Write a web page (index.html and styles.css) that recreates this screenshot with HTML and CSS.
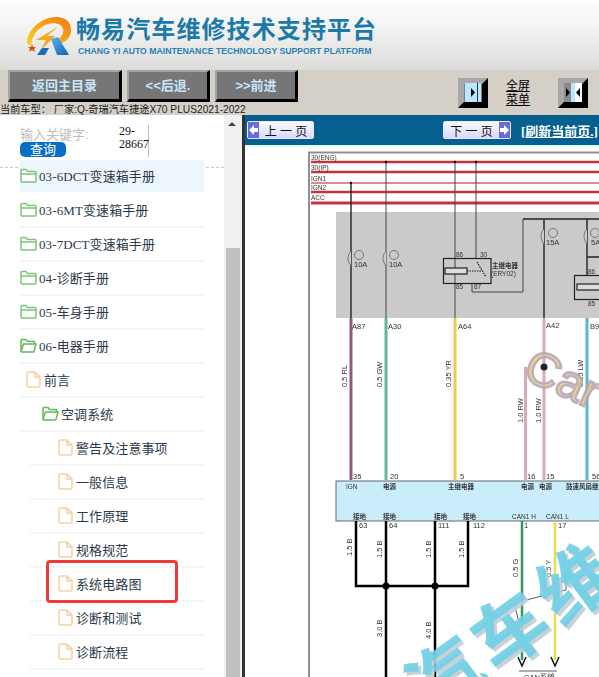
FILE: index.html
```html
<!DOCTYPE html>
<html>
<head>
<meta charset="utf-8"/>
<title>畅易汽车维修技术支持平台</title>
<link rel="stylesheet" href="styles.css">
</head>
<body>

<div class="header">
  <svg class="logo" width="48" height="44" viewBox="0 0 48 44">
    <defs>
      <linearGradient id="swoosh" x1="0" y1="1" x2="1" y2="0">
        <stop offset="0" stop-color="#ffd21e"/>
        <stop offset="0.55" stop-color="#f9a010"/>
        <stop offset="1" stop-color="#ee7a12"/>
      </linearGradient>
      <linearGradient id="rleg" x1="0" y1="0" x2="1" y2="1">
        <stop offset="0" stop-color="#59b4ee"/>
        <stop offset="1" stop-color="#1260b8"/>
      </linearGradient>
    </defs>
    <path d="M2 28C2 14 18 1 33 2C43 3 47 10 46 17C45 23 41 26 37 28L31 26C36 23 39 19 38 14C37 9 30 7 23 9C13 12 7 20 6 31Z" fill="url(#swoosh)"/>
    <path d="M34 11L11 25L21 25L16 35L30 21L22 21Z" fill="#f7a815"/>
    <path d="M12 40L17 33L24 33L20 40Z" fill="#1c6cc0"/>
    <path d="M26 24L33 22L44 40L32 40Z" fill="url(#rleg)"/>
    <path d="M7 29L8 32L11 32L9 34L10 37L7 35L4 37L5 34L3 32L6 32Z" fill="#e0491c"/>
  </svg>
  <div class="brand">
    <div class="brand-cn">畅易汽车维修技术支持平台</div>
    <div class="brand-en">CHANG YI AUTO MAINTENANCE TECHNOLOGY SUPPORT PLATFORM</div>
  </div>
</div>

<div class="toolbar">
  <div class="toolbar-left">
    <div class="navbtns">
      <a class="navbtn wide">返回主目录</a>
      <a class="navbtn">&lt;&lt;后退.</a>
      <a class="navbtn">&gt;&gt;前进</a>
    </div>
    <div class="status">当前车型： 厂家:Q-奇瑞汽车捷途X70 PLUS2021-2022</div>
  </div>
  <div class="tools">
    <svg width="30" height="30" viewBox="0 0 30 30">
      <rect width="30" height="30" fill="#808080"/>
      <path d="M0 0H30L24 6H6V24L0 30Z" fill="#a8a8a8"/>
      <path d="M30 0V30H0L6 24H24V6Z" fill="#000"/>
      <rect x="7" y="5" width="16" height="19" fill="#b8e8ff"/>
      <rect x="19" y="5" width="1" height="19" fill="#333"/>
      <path d="M13 10L17 14.500L13 19Z" fill="#000"/>
    </svg>
    <a class="fullscreen">全屏<br/>菜单</a>
    <svg width="30" height="30" viewBox="0 0 30 30">
      <rect width="30" height="30" fill="#808080"/>
      <path d="M0 0H30L24 6H6V24L0 30Z" fill="#a8a8a8"/>
      <path d="M30 0V30H0L6 24H24V6Z" fill="#000"/>
      <rect x="6" y="5" width="7" height="19" fill="#8a8a8a"/>
      <rect x="13" y="5" width="4" height="19" fill="#b8e8ff"/>
      <rect x="17" y="5" width="7" height="19" fill="#fff"/>
      <path d="M8 10L12 14.500L8 19Z" fill="#000"/>
      <path d="M22 10L18 14.500L22 19Z" fill="#000"/>
    </svg>
  </div>
</div>

<div class="main">
  <div class="sidebar">
    <div class="panel">
      <div class="search">
        <div class="search-left">
          <div class="search-label">输入关键字:</div>
          <a class="search-btn">查询</a>
        </div>
        <div class="search-value">29-28667</div>
      </div>
      <div class="tree">
        <div class="row active"><svg class="ico"><use href="#folder"/></svg>03-6DCT变速箱手册</div>
        <div class="row"><svg class="ico"><use href="#folder"/></svg>03-6MT变速箱手册</div>
        <div class="row"><svg class="ico"><use href="#folder"/></svg>03-7DCT变速箱手册</div>
        <div class="row"><svg class="ico"><use href="#folder"/></svg>04-诊断手册</div>
        <div class="row"><svg class="ico"><use href="#folder"/></svg>05-车身手册</div>
        <div class="row"><svg class="ico"><use href="#folder-open"/></svg>06-电器手册</div>
        <div class="row lvl1"><svg class="ico"><use href="#file"/></svg>前言</div>
        <div class="row lvl2"><svg class="ico"><use href="#folder-open"/></svg>空调系统</div>
        <div class="row lvl3"><svg class="ico"><use href="#file"/></svg>警告及注意事项</div>
        <div class="row lvl3"><svg class="ico"><use href="#file"/></svg>一般信息</div>
        <div class="row lvl3"><svg class="ico"><use href="#file"/></svg>工作原理</div>
        <div class="row lvl3"><svg class="ico"><use href="#file"/></svg>规格规范</div>
        <div class="row lvl3 marked"><svg class="ico"><use href="#file"/></svg>系统电路图<span class="redbox"></span></div>
        <div class="row lvl3"><svg class="ico"><use href="#file"/></svg>诊断和测试</div>
        <div class="row lvl3"><svg class="ico"><use href="#file"/></svg>诊断流程</div>
      </div>
    </div>
    <div class="scrollbar">
      <span class="scroll-up"></span>
      <span class="scroll-thumb"></span>
    </div>
  </div>

  <div class="viewer">
    <div class="pagebar">
      <a class="pagebtn prev"><span class="pagebtn-arrow"><svg width="9" height="10"><path d="M0 5L5 0V3H9V7H5V10Z" fill="#fff"/></svg></span><span class="pagebtn-text">上 一 页</span></a>
      <a class="pagebtn next"><span class="pagebtn-text">下 一 页</span><span class="pagebtn-arrow"><svg width="9" height="10"><path d="M9 5L4 0V3H0V7H4V10Z" fill="#fff"/></svg></span></a>
      <a class="refresh">[刷新当前页.]</a>
    </div>
    <div class="sheet">
      <!-- wiring diagram, coordinates are page pixels -->
      <svg class="diagram" width="354" height="532" viewBox="245 145 354 532">
        <rect x="245" y="145" width="354" height="2" fill="#e6fbff"/>
        <path d="M309 677V152.500H599" class="frame"/>

        <path d="M311 162H599M311 172H599M311 192H599" class="bus"/>
        <path d="M311 183H599" class="bus thin"/>
        <path d="M311 203H599" class="bus thick"/>
        <text x="311" y="160" class="lbl">30(ENG)</text>
        <text x="311" y="170" class="lbl">30(IP)</text>
        <text x="311" y="181" class="lbl">IGN1</text>
        <text x="311" y="190" class="lbl">IGN2</text>
        <text x="311" y="200" class="lbl">ACC</text>

        <rect x="336" y="212" width="263" height="106" fill="#cacaca"/>

        <path d="M351 183V318" class="w blk"/>
        <path d="M386 162V318M455 162V318M476 162V258" class="w gry"/>
        <path d="M544 219V318M587 219V275" class="w blk"/>
        <path d="M523 219H599M587 257H599" class="w blk"/>
        <path d="M523 219V292H472V283" class="w gry"/>

        <circle cx="386" cy="162" r="1.200"/><circle cx="455" cy="162" r="1.200"/><circle cx="476" cy="162" r="1.200"/><circle cx="351" cy="183" r="1.200"/>

        <g class="fuses">
          <circle cx="359" cy="255" r="4.500"/><circle cx="394" cy="255" r="4.500"/><circle cx="553" cy="233" r="4.500"/><circle cx="595" cy="233" r="4.500"/>
          <path d="M351 251C347 255 347 261 351 266M386 251C382 255 382 261 386 266M544 229C540 233 540 239 544 244M587 229C583 233 583 239 587 244"/>
        </g>
        <text x="354" y="267" class="lbl big">10A</text>
        <text x="389" y="267" class="lbl big">10A</text>
        <text x="546" y="245" class="lbl big">15A</text>
        <text x="591" y="245" class="lbl big">5A</text>

        <rect x="443.500" y="258.500" width="47.500" height="25" class="relay"/>
        <rect x="445" y="268" width="22" height="6" class="relay thin"/>
        <path d="M467 271H482M477 262L486 277" class="relay dash"/>
        <text x="456" y="257" class="lbl">86</text>
        <text x="480" y="257" class="lbl">30</text>
        <text x="456" y="289" class="lbl">85</text>
        <text x="474" y="289" class="lbl">87</text>
        <text x="492" y="268" class="lbl cn">主继电器</text>
        <text x="491" y="276" class="lbl">(ERY02)</text>
        <rect x="574.500" y="275.500" width="30" height="24" class="relay"/>
        <rect x="577" y="284" width="28" height="6" class="relay thin"/>
        <text x="588" y="274" class="lbl">86</text>
        <text x="588" y="306" class="lbl">85</text>

        <path d="M351 318V480" class="core" stroke="#8f5a7c"/>
        <path d="M386 318V480" class="core" stroke="#62b79a"/>
        <path d="M455 318V480" class="core" stroke="#f2c94c"/>
        <path d="M525.500 367V480" class="core" stroke="#d9a9b6"/>
        <path d="M544 318V480" class="core" stroke="#d9a9b6"/>
        <path d="M587 318V480" class="core" stroke="#5cb6c9"/>
        <circle cx="544" cy="367" r="3.500" fill="#222"/>

        <text x="352" y="329" class="lbl big">A87</text>
        <text x="388" y="329" class="lbl big">A30</text>
        <text x="458" y="329" class="lbl big">A64</text>
        <text x="546" y="328" class="lbl big">A42</text>
        <text x="590" y="329" class="lbl big">B99</text>

        <text class="lbl vert" transform="translate(347 387) rotate(-90)">0.5 RL</text>
        <text class="lbl vert" transform="translate(382 387) rotate(-90)">0.5 GW</text>
        <text class="lbl vert" transform="translate(451 387) rotate(-90)">0.35 YR</text>
        <text class="lbl vert" transform="translate(523 423) rotate(-90)">1.0 RW</text>
        <text class="lbl vert" transform="translate(541 423) rotate(-90)">1.0 RW</text>
        <text class="lbl vert" transform="translate(583 387) rotate(-90)">0.35 LW</text>

        <text x="353" y="479" class="lbl big">35</text>
        <text x="390" y="479" class="lbl big">20</text>
        <text x="460" y="479" class="lbl big">5</text>
        <text x="527" y="479" class="lbl big">16</text>
        <text x="546" y="479" class="lbl big">15</text>
        <text x="592" y="479" class="lbl big">56</text>

        <rect x="336" y="481" width="270" height="40" fill="#c9edfb" stroke="#667" stroke-width="1"/>
        <text x="346" y="489" class="lbl">IGN</text>
        <text x="383" y="489" class="lbl cn">电源</text>
        <text x="448" y="489" class="lbl cn">主继电器</text>
        <text x="521" y="489" class="lbl cn">电源</text>
        <text x="539" y="489" class="lbl cn">电源</text>
        <text x="566" y="489" class="lbl cn">鼓速风扇继电器</text>
        <text x="353" y="519" class="lbl cn">接地</text>
        <text x="383" y="519" class="lbl cn">接地</text>
        <text x="434" y="519" class="lbl cn">接地</text>
        <text x="463" y="519" class="lbl cn">接地</text>
        <text x="512" y="519" class="lbl">CAN1 H</text>
        <text x="546" y="519" class="lbl">CAN1 L</text>

        <text x="359" y="528" class="lbl big">63</text>
        <text x="389" y="528" class="lbl big">64</text>
        <text x="438" y="528" class="lbl big">111</text>
        <text x="473" y="528" class="lbl big">112</text>
        <text x="524" y="528" class="lbl big">1</text>
        <text x="558" y="528" class="lbl big">17</text>

        <path d="M356 521V586H468V521M386 521V677M435 521V677" class="heavy"/>
        <circle cx="386" cy="586" r="3.500"/><circle cx="435" cy="586" r="3.500"/>
        <text class="lbl vert" transform="translate(352 556) rotate(-90)">1.5 B</text>
        <text class="lbl vert" transform="translate(382 558) rotate(-90)">1.5 B</text>
        <text class="lbl vert" transform="translate(431 558) rotate(-90)">1.5 B</text>
        <text class="lbl vert" transform="translate(464 558) rotate(-90)">1.5 B</text>
        <text class="lbl vert" transform="translate(382 637) rotate(-90)">3.0 B</text>
        <text class="lbl vert" transform="translate(431 639) rotate(-90)">4.0 B</text>

        <path d="M522 521V660" class="can" stroke="#2e9a5c"/>
        <path d="M555 521V660" class="can" stroke="#e8dc4e"/>
        <path d="M518 657L522 666L526 657M551 657L555 666L559 657" class="arrows"/>
        <text class="lbl vert" transform="translate(518 577) rotate(-90)">0.5 G</text>
        <text class="lbl vert" transform="translate(551 577) rotate(-90)">0.5 Y</text>
        <path d="M519 622L514 603L566 590L566 573" class="twist"/>
        <path d="M519 671H557" class="twist"/>
        <text x="524" y="680" class="lbl big">CAN系统</text>

        <!-- site watermark -->
        <text class="mark-car" transform="translate(521 378) rotate(24)">Car</text>
        <text class="mark-cn shadow" transform="translate(434 724) rotate(-36)">汽车维修</text>
        <text class="mark-cn" transform="translate(431 721) rotate(-36)">汽车维修</text>
      </svg>
    </div>
  </div>
</div>

<svg class="defs" width="0" height="0">
  <symbol id="folder" viewBox="0 0 17 17">
    <path d="M1 14V3.500Q1 2.500 2 2.500H6L7.500 4.500H15Q16 4.500 16 5.500V14Q16 15 15 15H2Q1 15 1 14ZM1 7H16" fill="#fff" stroke="#7cc576" stroke-width="1.500"/>
  </symbol>
  <symbol id="folder-open" viewBox="0 0 17 17">
    <path d="M1 14V3.500Q1 2.500 2 2.500H6L7.500 4.500H14.500V7" fill="#fff" stroke="#62b85c" stroke-width="1.500"/>
    <path d="M1 14.500L3.500 7H16L14 14.500Q14 15 13 15H2Q1 15 1 14.500Z" fill="#fff" stroke="#62b85c" stroke-width="1.500"/>
  </symbol>
  <symbol id="file" viewBox="0 0 17 17">
    <path d="M2 2.500Q2 1 3.500 1H10L15 6V14.500Q15 16 13.500 16H3.500Q2 16 2 14.500ZM10 1V6H15" fill="#fff" stroke="#f6cfa0" stroke-width="1.500"/>
  </symbol>
</svg>

</body>
</html>
```

FILE: styles.css
```css
html, body {
  margin: 0px;
  padding: 0px;
  height: 677px;
  overflow: hidden;
}

body {
  font-family: "Liberation Sans", "Noto Sans CJK SC", sans-serif;
  background: #fff;
  display: flex;
  flex-direction: column;
}

.defs {
  position: absolute;
}

/* top banner */
.header {
  height: 70px;
  flex: none;
  display: flex;
  align-items: flex-start;
  background: linear-gradient(#fdfdfd 0%, #f6f6f6 30%, #dcdcda 100%);
}

.logo {
  margin: 15px 0 0 25px;
  flex: none;
}

.brand {
  margin: 15px 0 0 3px;
}

.brand-cn {
  font-size: 24px;
  line-height: 30px;
  font-weight: bold;
  letter-spacing: 1.100px;
  color: #1c7aa8;
  white-space: nowrap;
}

.brand-en {
  margin: 1px 0 0 2px;
  font-size: 8.700px;
  line-height: 11px;
  font-weight: bold;
  color: #2a80b4;
  white-space: nowrap;
}

/* buttons row */
.toolbar {
  height: 45px;
  flex: none;
  display: flex;
  background: #d4d0c8;
}

.toolbar-left {
  width: 458px;
  flex: none;
}

.navbtns {
  display: flex;
  gap: 5px;
  padding-left: 8px;
}

.navbtn {
  box-sizing: border-box;
  width: 83px;
  height: 32px;
  background: #767676;
  border-style: solid;
  border-width: 2px 3px 3px 2px;
  border-color: #a4a4a4 #000 #000 #a4a4a4;
  color: #c6e6fb;
  font-size: 13px;
  font-weight: bold;
  line-height: 27px;
  text-align: center;
}

.navbtn.wide {
  width: 114px;
}

.status {
  margin-top: 2px;
  font-size: 10.200px;
  line-height: 11px;
  color: #222;
  white-space: nowrap;
}

.tools {
  display: flex;
  align-items: flex-start;
  padding-top: 8px;
}

.fullscreen {
  width: 26px;
  margin: 1px 26px 0 18px;
  font-size: 12px;
  line-height: 14px;
  color: #000;
  text-decoration: underline;
}

/* main area */
.main {
  flex: 1;
  display: flex;
  min-height: 0;
}

.sidebar {
  width: 245px;
  flex: none;
  display: flex;
  box-sizing: border-box;
  border-right: 3px solid #333;
  overflow: hidden;
}

.panel {
  width: 224px;
  flex: none;
  background: #fff;
  overflow: hidden;
}

.search {
  box-sizing: border-box;
  height: 53px;
  padding: 10px 0 0 20px;
  display: flex;
  border-bottom: 1px dashed #c8c8c8;
}

.search-left {
  width: 99px;
}

.search-label {
  padding-top: 2px;
  font-size: 13px;
  line-height: 15px;
  color: #bdbdbd;
  white-space: nowrap;
}

.search-btn {
  display: block;
  width: 46px;
  height: 15px;
  background: #0a6fc4;
  border-radius: 5px;
  color: #fff;
  font-size: 13px;
  line-height: 15px;
  text-align: center;
}

.search-value {
  box-sizing: border-box;
  width: 30px;
  height: 32px;
  font-family: "Liberation Serif", serif;
  font-size: 12px;
  line-height: 13px;
  color: #111;
  border-right: 1px solid #c0c0c0;
}

.tree {
  font-family: "Liberation Serif", "Noto Sans CJK SC", serif;
  font-size: 13px;
  letter-spacing: 0.100px;
  color: #2b3a4a;
  margin-top: -8px;
}

.row {
  position: relative;
  box-sizing: border-box;
  height: 34px;
  margin: 0 20px;
  padding-bottom: 2px;
  display: flex;
  align-items: center;
  gap: 2px;
  border-bottom: 2px solid #f5f5f5;
  white-space: nowrap;
}

.row.active {
  background: #eef6fd;
  border-bottom-color: #fff;
}

.row.lvl1 { padding-left: 5px; }
.row.lvl2 { padding-left: 22px; }
.row.lvl3 { margin-left: 30px; padding-left: 27px; }

.ico {
  width: 17px;
  height: 17px;
  flex: none;
}

.redbox {
  position: absolute;
  left: 16px;
  top: -8px;
  width: 126px;
  height: 37px;
  border: 3px solid #f03a3a;
  border-radius: 4px;
}

.scrollbar {
  position: relative;
  width: 18px;
  flex: none;
  background: #f0f0f0;
}

.scroll-up {
  position: absolute;
  left: 4px;
  top: 7px;
  border-style: solid;
  border-width: 0 4px 4px 4px;
  border-color: transparent transparent #444 transparent;
}

.scroll-thumb {
  position: absolute;
  left: 2px;
  top: 133px;
  bottom: 0px;
  width: 14px;
  background: #c0c0c0;
}

/* right side */
.viewer {
  flex: 1;
  min-width: 0;
  display: flex;
  flex-direction: column;
}

.pagebar {
  height: 30px;
  flex: none;
  background: #05608f;
  display: flex;
  align-items: center;
  white-space: nowrap;
}

.pagebtn {
  box-sizing: border-box;
  height: 18px;
  display: flex;
  align-items: center;
  justify-content: space-between;
  background: linear-gradient(#fafaff, #d8d8fa);
  border: 1px solid #e8e8ff;
  border-radius: 2px;
  font-size: 12px;
  color: #111;
}

.pagebtn.prev {
  width: 67px;
  margin-left: 2px;
}

.pagebtn.next {
  width: 68px;
  margin-left: 129px;
}

.pagebtn-arrow {
  width: 11px;
  height: 16px;
  display: flex;
  align-items: center;
  justify-content: center;
  background: #6a6ae0;
}

.pagebtn-text {
  flex: 1;
  text-align: center;
}

.refresh {
  margin: 1px 0 0 10px;
  font-family: "Liberation Serif", "Noto Sans CJK SC", serif;
  font-size: 13px;
  font-weight: bold;
  color: #fff;
  text-decoration: underline;
}

.sheet {
  flex: 1;
  min-height: 0;
  background: #fff;
  overflow: hidden;
}

.diagram {
  display: block;
  filter: blur(0.350px);
}

.frame {
  fill: none;
  stroke: #909090;
  stroke-width: 2;
}

.bus {
  fill: none;
  stroke: #c4323f;
  stroke-width: 2.500;
}

.bus.thin {
  stroke: #d9606c;
  stroke-width: 1.500;
}

.bus.thick {
  stroke-width: 3;
}

.lbl {
  font-family: "Liberation Sans", "Noto Sans CJK SC", sans-serif;
  font-size: 6.500px;
  fill: #333;
}

.lbl.big,
.lbl.vert {
  font-size: 7.500px;
}

.lbl.cn {
  font-size: 6.500px;
  font-weight: bold;
}

.w {
  fill: none;
}

.w.blk {
  stroke: #222;
  stroke-width: 1.400;
}

.w.gry {
  stroke: #444;
  stroke-width: 1;
}

.fuses circle {
  fill: #cacaca;
  stroke: #555;
  stroke-width: 0.700;
}

.fuses path {
  fill: #cacaca;
  stroke: #555;
  stroke-width: 0.700;
}

.relay {
  fill: none;
  stroke: #222;
  stroke-width: 1.200;
}

.relay.thin {
  fill: #ddd;
}

.relay.dash {
  stroke-dasharray: 1.500, 1;
}

.core {
  fill: none;
  stroke-width: 3;
}

.heavy {
  fill: none;
  stroke: #000;
  stroke-width: 2.500;
}

.can {
  fill: none;
  stroke-width: 2.500;
}

.arrows {
  fill: none;
  stroke: #111;
  stroke-width: 1.500;
}

.twist {
  fill: none;
  stroke: #333;
  stroke-width: 0.800;
}

.mark-car {
  font-family: "Liberation Sans", sans-serif;
  font-size: 48px;
  fill: #e3d27a;
  stroke: #b9a6b4;
  stroke-width: 2.500;
  opacity: 0.9;
}

.mark-cn {
  font-family: "Noto Sans CJK SC", sans-serif;
  font-size: 74px;
  font-weight: bold;
  letter-spacing: 6px;
  fill: #6fd0e6;
  opacity: 0.9;
}

.mark-cn.shadow {
  fill: #c4cdd4;
}
```
